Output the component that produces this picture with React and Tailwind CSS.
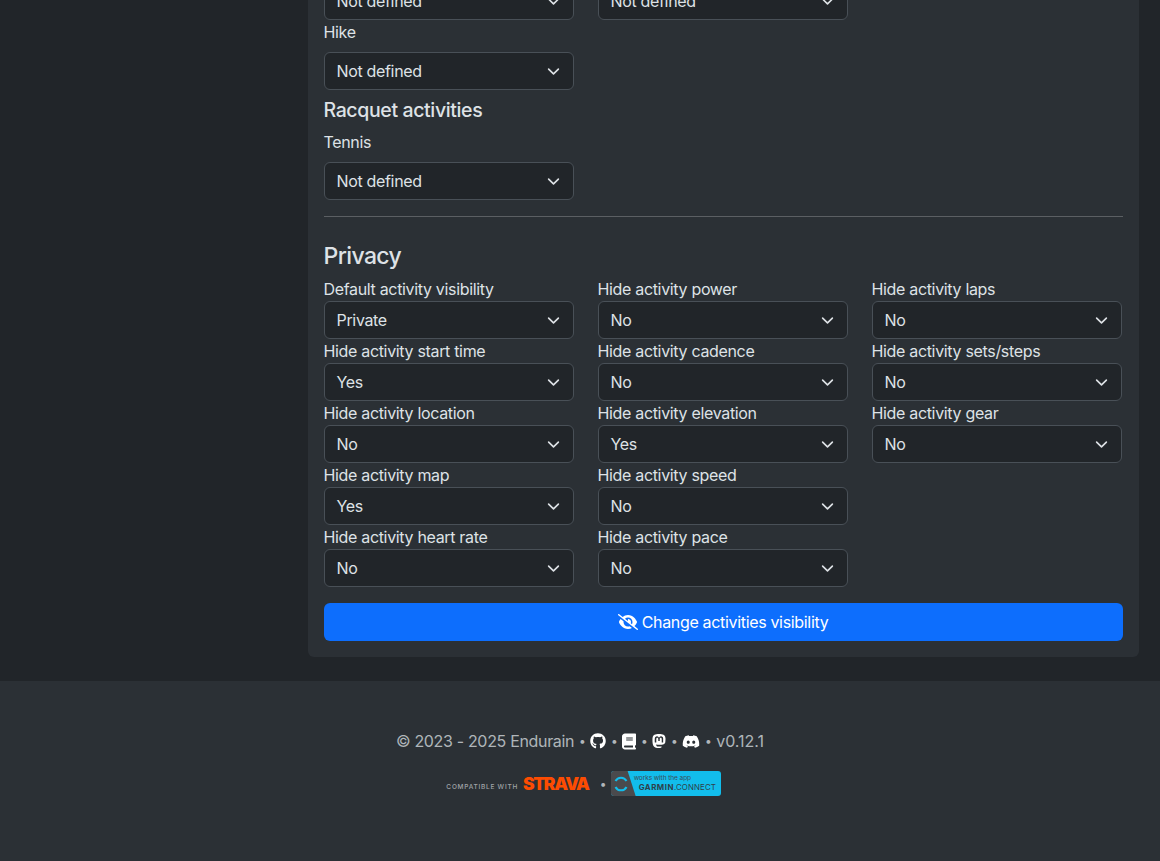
import React from "react";
import { FaGithub, FaBook, FaMastodon, FaDiscord, FaEyeSlash } from "react-icons/fa6";

function Sel({ v }) {
  return (
    <div className="flex h-[38px] items-center justify-between rounded-[6px] border border-[#495057] bg-[#212529] pl-[11.5px] pr-[13px] text-[#dee2e6]">
      <span>{v}</span>
      <svg width="13" height="13" viewBox="0 0 16 16" fill="none" stroke="#dee2e6" strokeWidth="2" strokeLinecap="round" strokeLinejoin="round">
        <path d="m2 5 6 6 6-6" />
      </svg>
    </div>
  );
}

function F({ l, v }) {
  return (
    <div>
      <div className="-ml-[0.5px] h-6 leading-6 text-[#dee2e6]">{l}</div>
      <Sel v={v} />
    </div>
  );
}

function Dot() {
  return <span className="flex w-[5px] justify-center text-[12px]">•</span>;
}

const cols = [
  [
    ["Default activity visibility", "Private"],
    ["Hide activity start time", "Yes"],
    ["Hide activity location", "No"],
    ["Hide activity map", "Yes"],
    ["Hide activity heart rate", "No"],
  ],
  [
    ["Hide activity power", "No"],
    ["Hide activity cadence", "No"],
    ["Hide activity elevation", "Yes"],
    ["Hide activity speed", "No"],
    ["Hide activity pace", "No"],
  ],
  [
    ["Hide activity laps", "No"],
    ["Hide activity sets/steps", "No"],
    ["Hide activity gear", "No"],
  ],
];

export default function App() {
  return (
    <div className="h-[861px] overflow-hidden bg-[#212529] font-['Inter',sans-serif] text-base tracking-[-0.33px] text-[#dee2e6]">
      <div className="h-[681px] overflow-hidden pl-[308px] pr-[21px]">
        <div className="-mt-[18px] rounded-b-[6px] bg-[#2b3035] px-4 pb-4">
          <div className="grid grid-cols-[250px_250px_250px] gap-x-6">
            <Sel v="Not defined" />
            <Sel v="Not defined" />
          </div>
          <div className="grid grid-cols-[250px_250px_250px] gap-x-6">
            <div>
              <div className="-ml-[0.5px] mb-2 h-6 leading-6">Hike</div>
              <Sel v="Not defined" />
            </div>
          </div>
          <div className="-ml-[0.5px] mt-2 mb-2 h-6 text-[19.5px] font-medium leading-6 tracking-[-0.37px]">Racquet activities</div>
          <div className="grid grid-cols-[250px_250px_250px] gap-x-6">
            <div>
              <div className="-ml-[0.5px] mb-2 h-6 leading-6">Tennis</div>
              <Sel v="Not defined" />
            </div>
          </div>
          <hr className="mt-4 mb-0 border-t border-[#5b5f63]" />
          <div className="-ml-[0.5px] mt-[25px] mb-[6px] h-[29px] text-[23px] font-medium leading-[29px] tracking-[-0.6px]">Privacy</div>
          <div className="grid grid-cols-[250px_250px_250px] gap-x-6">
            {cols.map((c, i) => (
              <div key={i}>
                {c.map(([l, v]) => (
                  <F key={l} l={l} v={v} />
                ))}
              </div>
            ))}
          </div>
          <div className="mt-4 flex h-[38px] items-center justify-center gap-[4px] rounded-[6px] bg-[#0d6efd] text-white">
            <FaEyeSlash className="-ml-[1px] h-[16px] w-[20px]" />
            <span>Change activities visibility</span>
          </div>
        </div>
      </div>
      <div className="flex h-[180px] flex-col items-center bg-[#2b3035] pt-12 text-[rgba(222,226,230,0.75)]">
        <div className="flex h-6 items-center gap-[5.5px] leading-6">
          <span>© 2023 - 2025 Endurain</span>
          <Dot />
          <FaGithub className="h-[16px] w-[16px] text-white" />
          <Dot />
          <FaBook className="h-[17px] w-[14px] text-white" />
          <Dot />
          <FaMastodon className="h-[16px] w-[14px] text-white" />
          <Dot />
          <FaDiscord className="h-[15px] w-[18px] text-white" />
          <Dot />
          <span className="tracking-[0px]">v0.12.1</span>
        </div>
        <div className="relative ml-[7px] mt-[18px] flex h-[25px] items-center">
          <span className="mt-[7px] text-[6.5px] font-medium leading-none tracking-[0.75px] text-[#a0a4a8]">COMPATIBLE WITH</span>
          <span className="ml-[5px] text-[17.5px] font-black leading-6 tracking-[-1.4px] text-[#fc4c02]">STRAVA</span>
          <span className="ml-[11px] mr-[5px] w-[6px] text-[12px]">•</span>
          <div className="relative h-[25px] w-[110px] overflow-hidden rounded-[3px] bg-[#12bdec] pl-[23px] pt-[3px]">
            <div className="absolute inset-0 flex items-center bg-[#4a4a4d] pl-[2px] [clip-path:polygon(0_0,17px_0,25px_100%,0_100%)]">
              <svg width="16" height="16" viewBox="0 0 16 16" fill="none" stroke="#12bdec" strokeWidth="2">
                <path d="M2.5 5a6.2 6.2 0 0 1 11 0M13.5 11a6.2 6.2 0 0 1-11 0" />
              </svg>
            </div>
            <div className="text-[6.6px] leading-[9px] tracking-[-0.1px] text-[#3a4d5a]">works with the app</div>
            <div className="ml-[5px] text-[7.9px] leading-[9px] tracking-[0.1px] text-[#2f3f4a]"><span className="font-bold tracking-[0.5px]">GARMIN</span>.CONNECT</div>
          </div>
        </div>
      </div>
    </div>
  );
}
